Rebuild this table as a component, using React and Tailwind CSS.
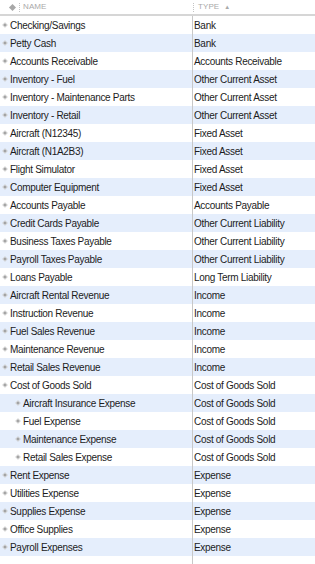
const accounts = [
    ['Checking/Savings', 'Bank'],
    ['Petty Cash', 'Bank'],
    ['Accounts Receivable', 'Accounts Receivable'],
    ['Inventory - Fuel', 'Other Current Asset'],
    ['Inventory - Maintenance Parts', 'Other Current Asset'],
    ['Inventory - Retail', 'Other Current Asset'],
    ['Aircraft (N12345)', 'Fixed Asset'],
    ['Aircraft (N1A2B3)', 'Fixed Asset'],
    ['Flight Simulator', 'Fixed Asset'],
    ['Computer Equipment', 'Fixed Asset'],
    ['Accounts Payable', 'Accounts Payable'],
    ['Credit Cards Payable', 'Other Current Liability'],
    ['Business Taxes Payable', 'Other Current Liability'],
    ['Payroll Taxes Payable', 'Other Current Liability'],
    ['Loans Payable', 'Long Term Liability'],
    ['Aircraft Rental Revenue', 'Income'],
    ['Instruction Revenue', 'Income'],
    ['Fuel Sales Revenue', 'Income'],
    ['Maintenance Revenue', 'Income'],
    ['Retail Sales Revenue', 'Income'],
    ['Cost of Goods Sold', 'Cost of Goods Sold'],
    ['Aircraft Insurance Expense', 'Cost of Goods Sold', true],
    ['Fuel Expense', 'Cost of Goods Sold', true],
    ['Maintenance Expense', 'Cost of Goods Sold', true],
    ['Retail Sales Expense', 'Cost of Goods Sold', true],
    ['Rent Expense', 'Expense'],
    ['Utilities Expense', 'Expense'],
    ['Supplies Expense', 'Expense'],
    ['Office Supplies', 'Expense'],
    ['Payroll Expenses', 'Expense'],
];

function Grip() {
    return (
        <span className="flex flex-col gap-[1px] h-[9px] w-[1px] mr-[3px]">
            <span className="w-[1px] h-[1px] bg-[#c4c4c4]" />
            <span className="w-[1px] h-[1px] bg-[#c4c4c4]" />
            <span className="w-[1px] h-[1px] bg-[#c4c4c4]" />
            <span className="w-[1px] h-[1px] bg-[#c4c4c4]" />
            <span className="w-[1px] h-[1px] bg-[#c4c4c4]" />
        </span>
    );
}

export default function App() {
    return (
        <div className="w-[315px] h-[564px] bg-white font-['Liberation_Sans',Arial,sans-serif] text-[#1c1c1c] overflow-hidden flex flex-col">
            {/* header */}
            <div className="flex h-[16px] border-b-2 border-[#d6d6d6] shrink-0">
                <div className="w-[192px] flex items-center pl-[10px]">
                    <span className="w-[5px] h-[5px] bg-[#a8a8a8] rotate-45 mr-[4px]" />
                    <Grip />
                    <span className="text-[8px] text-[#a9a9a9] tracking-[0.1px]">NAME</span>
                </div>
                <div className="flex-1 flex items-center pl-[1px]">
                    <Grip />
                    <span className="text-[8px] text-[#a9a9a9] tracking-[0.1px] ml-[1px]">TYPE</span>
                    <span className="text-[6px] text-[#a9a9a9] ml-[5px]">▲</span>
                </div>
            </div>

            {/* rows */}
            <div className="flex flex-1">
                <div className="w-[192px] flex flex-col">
                    {accounts.map(([name, , sub], i) => (
                        <div
                            key={name}
                            className={`h-[18px] flex items-center text-[10px] tracking-[-0.3px] ${i % 2 ? 'bg-[#e5eefc]' : ''} ${sub ? 'pl-[17px]' : 'pl-[4px]'}`}
                        >
                            <span className="w-[2px] h-[2px] rotate-45 bg-[#8f8f8f] mr-[4px] outline outline-1 outline-[#c8c8c8]" />
                            {name}
                        </div>
                    ))}
                </div>
                <div className="flex-1 flex flex-col border-l border-[#c8c8c8]">
                    {accounts.map(([name, type], i) => (
                        <div
                            key={name}
                            className={`h-[18px] flex items-center pl-[1px] text-[10px] tracking-[-0.3px] ${i % 2 ? 'bg-[#e5eefc]' : ''}`}
                        >
                            {type}
                        </div>
                    ))}
                </div>
            </div>
        </div>
    );
}
